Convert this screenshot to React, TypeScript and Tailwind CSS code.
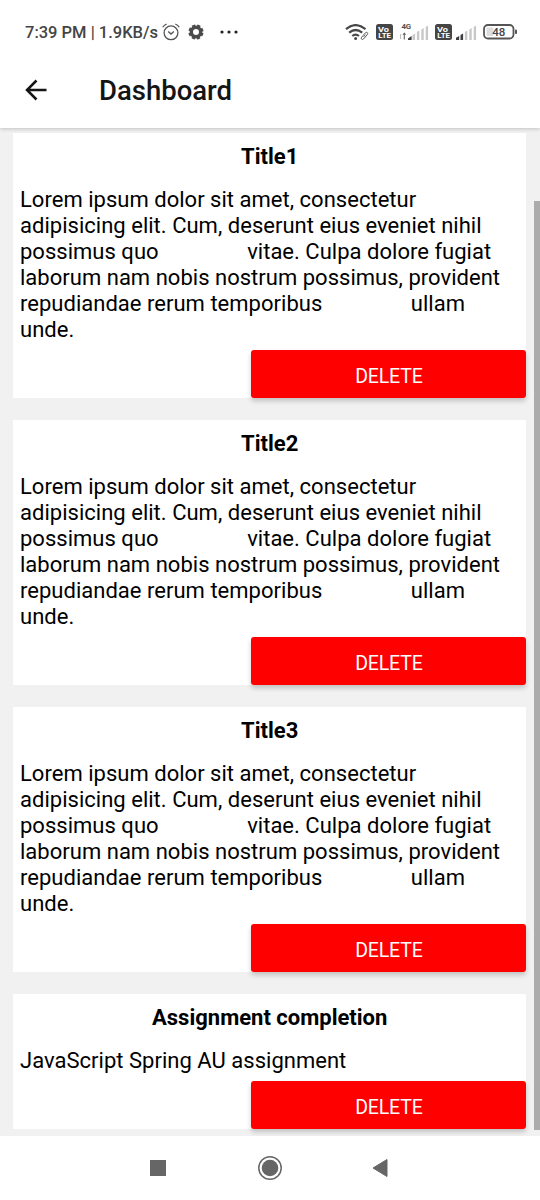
import React from "react";

type Item = { title: string; lines: [string, string?][] };

const lorem: [string, string?][] = [
  ["Lorem ipsum dolor sit amet, consectetur"],
  ["adipisicing elit. Cum, deserunt eius eveniet nihil"],
  ["possimus quo", "vitae. Culpa dolore fugiat"],
  ["laborum nam nobis nostrum possimus, provident"],
  ["repudiandae rerum temporibus", "ullam"],
  ["unde."],
];

const items: Item[] = [
  { title: "Title1", lines: lorem },
  { title: "Title2", lines: lorem },
  { title: "Title3", lines: lorem },
  { title: "Assignment completion", lines: [["JavaScript Spring AU assignment"]] },
];

function VoLte() {
  return (
    <svg width="17" height="16" viewBox="0 0 17 16" className="shrink-0">
      <rect width="17" height="16" rx="2.5" fill="#454545" />
      <g fill="#fff" fontFamily="Roboto, sans-serif" fontWeight="700">
        <text x="2" y="7.6" fontSize="8" textLength="11" lengthAdjust="spacingAndGlyphs">Vo</text>
        <text x="2.3" y="14.3" fontSize="7.8" textLength="12.8" lengthAdjust="spacingAndGlyphs">LTE</text>
      </g>
    </svg>
  );
}

function Signal({ roaming }: { roaming?: boolean }) {
  return (
    <svg width={roaming ? 29 : 21} height="18" viewBox={roaming ? "-8 0 29 18" : "0 0 21 18"} className="shrink-0">
      {roaming && (
        <g>
          <text x="-6.5" y="6" fontSize="7.8" fontWeight="700" fill="#505050" fontFamily="Roboto, sans-serif" textLength="9.5">4G</text>
          <path d="M-7.4 11v5" stroke="#bbb" strokeWidth="1" />
          <path d="M-3.7 16.5v-6l-1.4 1.2M-3.7 10.5l1.3 1.2" stroke="#666" strokeWidth="1.1" fill="none" />
          <path d="M0 17v-1.4l3.6-2.6V17z" fill="#3d3d3d" />
        </g>
      )}
      {!roaming && <path d="M0 17v-2.3l3.2-1.8V17zM4.5 17v-5l2.6-1.5V17z" fill="#3d3d3d" />}
      {roaming && <path d="M4.5 12l2.6-1.5V17H4.5z" fill="#c8c8c8" />}
      <path d="M8.9 9l2.4-1.5V17H8.9zM13.3 6.5l2.4-1.5v12h-2.4zM17.7 4l2.4-1.5V17h-2.4z" fill="#c8c8c8" />
    </svg>
  );
}

function StatusBar() {
  return (
    <div className="flex h-16 shrink-0 items-center pl-[25px] pr-[22px]">
      <span className="w-[134px] shrink-0 whitespace-pre pt-[2px] text-[16.5px] font-medium leading-5 text-[#444]">7:39 PM | 1.9KB/s</span>
      <svg width="18" height="18" viewBox="0 0 18 18" className="ml-[3px] shrink-0" fill="none" stroke="#555" strokeWidth="1.3">
        <circle cx="9" cy="9.8" r="6.9" />
        <path d="M6.2 8.5l2.8 2.6 2.8-2.6M.7 4.3Q2 2 4.7 1M17.3 4.3Q16 2 13.3 1" />
      </svg>
      <svg width="16" height="16" viewBox="0 0 16 16" className="ml-2 shrink-0">
        <circle cx="8" cy="8" r="4.7" fill="none" stroke="#4b4b4b" strokeWidth="3.4" />
        <circle cx="8" cy="8" r="6.6" fill="none" stroke="#4b4b4b" strokeWidth="2" strokeDasharray="3.3 1.884" strokeDashoffset="-0.95" />
      </svg>
      <svg width="20" height="4" viewBox="0 0 20 4" className="ml-4 shrink-0" fill="#222">
        <circle cx="2" cy="2" r="1.6" /><circle cx="9" cy="2" r="1.6" /><circle cx="16" cy="2" r="1.6" />
      </svg>
      <div className="ml-auto flex items-center">
        <svg width="24" height="17" viewBox="0 0 24 17" className="shrink-0" fill="none" stroke="#484848">
          <path d="M1 5.2Q10.5-3 20.5 5.2M4.2 8.7Q10.5 3.3 17.2 8.7M7.3 12Q10.5 9.3 14 12" strokeWidth="2.2" />
          <circle cx="10.6" cy="14.5" r="1.5" fill="#484848" stroke="none" />
          <path d="M18 11.5l2.5-2.8q1.2-.8 2 .1.6.8-.2 1.8L18.5 15q-1 .9-1.9.1-.8-.9.1-1.9l1.3-1.5M18.5 12.8l1.9-2.1" strokeWidth=".9" />
        </svg>
        <div className="ml-[7px]"><VoLte /></div>
        <div className="ml-[7px] mb-px"><Signal roaming /></div>
        <div className="ml-[6px]"><VoLte /></div>
        <div className="ml-[4px] mb-px"><Signal /></div>
        <svg width="35" height="16" viewBox="0 0 35 16" className="ml-[6px] shrink-0">
          <rect x="1" y="1" width="29.5" height="13.5" rx="4" fill="#fff" stroke="#555" strokeWidth="1.8" />
          <rect x="3.5" y="3.5" width="7" height="8.5" rx="1" fill="#ddd" />
          <rect x="32" y="5.5" width="2" height="4.5" rx=".8" fill="#555" />
          <text x="9.2" y="12" fontSize="11.5" fontWeight="500" fontFamily="Roboto, sans-serif" fill="#444">48</text>
        </svg>
      </div>
    </div>
  );
}

function Card({ title, lines }: Item) {
  return (
    <article className="flex flex-col bg-white">
      <h2 className="h-[53.5px] pt-[10.5px] text-center text-[22px] font-bold leading-[26px] text-black">{title}</h2>
      <div className="whitespace-pre pl-[7px] text-[22px] leading-[26px] tracking-[0.02px] text-black">
        {lines.map(([start, end]) => (
          <p key={start}>
            {start}
            {end && <span className="inline-block w-[88.5px]" />}
            {end}
          </p>
        ))}
      </div>
      <button className="mt-[7.5px] h-[48px] w-[275px] self-end rounded-[3px] bg-[#ff0000] pt-[4px] text-[19.5px] tracking-[-0.15px] text-white shadow-[0_3px_5px_rgba(0,0,0,0.2)]">
        DELETE
      </button>
    </article>
  );
}

export default function App() {
  return (
    <div className="flex h-[1200px] w-[540px] flex-col overflow-hidden bg-white font-['Roboto',sans-serif]">
      <header className="relative z-10 flex h-32 shrink-0 flex-col bg-white shadow-[0_1px_4px_rgba(0,0,0,0.2)]">
        <StatusBar />
        <div className="flex h-[52px] items-center pl-[25px]">
          <svg width="22" height="22" viewBox="0 0 22 22" fill="none" stroke="#151515" strokeWidth="2.5">
            <path d="M21.5 11H2M11.5 1.5L2 11l9.5 9.5" />
          </svg>
          <h1 className="ml-[52px] pt-[2px] text-[27.5px] font-medium leading-8 text-[#151515]">Dashboard</h1>
        </div>
      </header>
      <main className="flex h-[1008px] shrink-0 justify-between overflow-hidden bg-[#f1f1f1] pl-[13px]">
        <div className="flex w-[513.4px] flex-col gap-[22px] pt-[5.4px]">
          {items.map((item) => <Card key={item.title} {...item} />)}
        </div>
        <div className="mt-[73px] h-[929px] w-[6px] bg-[#ababab]" />
      </main>
      <nav className="flex h-16 items-center pl-[150px]">
        <svg width="16" height="16" viewBox="0 0 16 16"><rect width="16" height="16" fill="#666" /></svg>
        <svg width="24" height="26" viewBox="0 0 24 26" className="ml-[92px]">
          <circle cx="12" cy="13" r="11.2" fill="none" stroke="#666" strokeWidth="1.5" />
          <circle cx="12" cy="13" r="8.3" fill="#666" />
        </svg>
        <svg width="16" height="20" viewBox="0 0 16 20" className="ml-[90px]"><path d="M1 10L15 1.5v17z" fill="#666" stroke="#666" strokeLinejoin="round" /></svg>
      </nav>
    </div>
  );
}
